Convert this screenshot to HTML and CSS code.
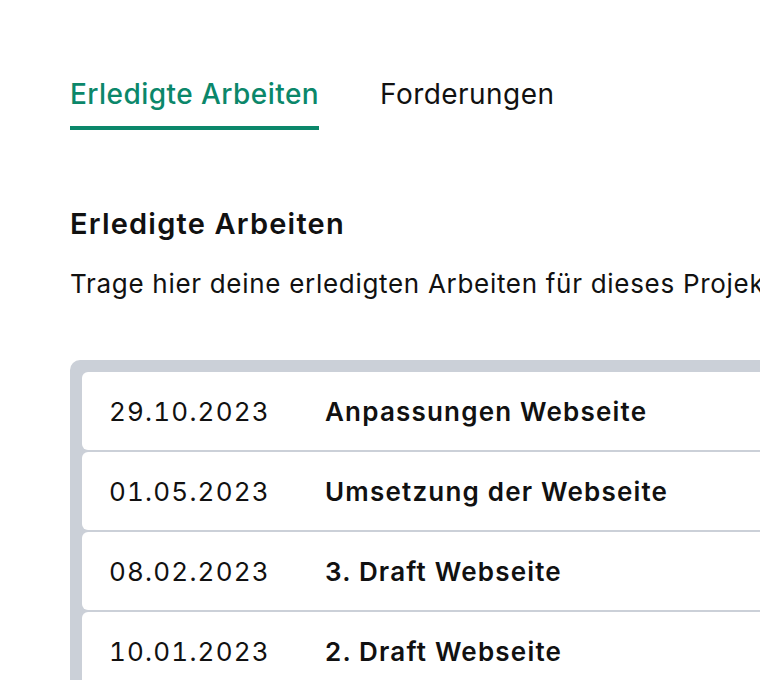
FILE: index.html
```html
<!DOCTYPE html>
<html lang="de">
<head>
<meta charset="utf-8">
<title>Erledigte Arbeiten</title>
<link rel="stylesheet" href="styles.css">
</head>
<body>
<div class="page">
  <nav class="tabs">
    <a class="tab tab-active">Erledigte Arbeiten</a>
    <a class="tab">Forderungen</a>
  </nav>
  <section class="section">
    <h2 class="title">Erledigte Arbeiten</h2>
    <p class="desc">Trage hier deine erledigten Arbeiten für dieses Projekt ein.</p>
    <div class="list">
      <div class="row"><span class="date">29.10.2023</span><span class="name">Anpassungen Webseite</span></div>
      <div class="row"><span class="date">01.05.2023</span><span class="name">Umsetzung der Webseite</span></div>
      <div class="row"><span class="date">08.02.2023</span><span class="name">3. Draft Webseite</span></div>
      <div class="row"><span class="date">10.01.2023</span><span class="name">2. Draft Webseite</span></div>
      <div class="row"><span class="date">05.01.2023</span><span class="name">1. Draft Webseite</span></div>
    </div>
  </section>
</div>
</body>
</html>
```
FILE: styles.css
```css
html, body {
  margin: 0;
  padding: 0;
  background: #ffffff;
  overflow: hidden;
}
body {
  font-family: Inter, "Noto Sans", sans-serif;
  color: #111111;
}
.page {
  width: 1100px;
  padding: 77px 0 0 70px;
}
.tabs {
  display: flex;
  gap: 61px;
}
.tab {
  font-size: 28px;
  line-height: 34px;
  letter-spacing: 0.45px;
  padding-bottom: 15px;
  border-bottom: 4px solid transparent;
  color: #111111;
}
.tab-active {
  color: #0b876a;
  font-weight: 500;
  border-bottom-color: #0b876a;
}
.section {
  padding-top: 76px;
}
.title {
  margin: 0;
  font-size: 29px;
  line-height: 36px;
  font-weight: 600;
  letter-spacing: 1.2px;
}
.desc {
  margin: 26px 0 0;
  font-size: 26px;
  line-height: 32px;
  letter-spacing: 0.7px;
  white-space: nowrap;
}
.list {
  margin-top: 60px;
  background: #cbd0d8;
  border-radius: 10px 0 0 0;
  padding: 12px 0 0 12px;
  display: flex;
  flex-direction: column;
  gap: 2px;
}
.row {
  background: #ffffff;
  border-radius: 6px 0 0 6px;
  height: 78px;
  display: flex;
  align-items: center;
  font-size: 26px;
}
.date {
  width: 243px;
  padding-left: 27px;
  box-sizing: border-box;
  font-variant-numeric: tabular-nums;
  letter-spacing: 1.2px;
}
.name {
  font-weight: 600;
  letter-spacing: 1.2px;
}
```
